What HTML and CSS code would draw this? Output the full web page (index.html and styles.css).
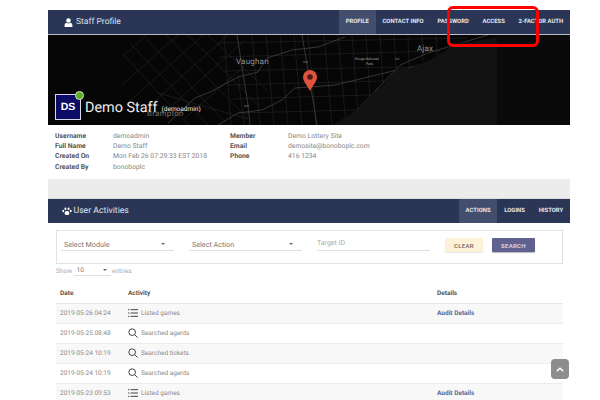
FILE: index.html
```html
<!DOCTYPE html>
<html lang="en">
<head>
<meta charset="utf-8">
<title>Staff Profile</title>
<link rel="stylesheet" href="styles.css">
</head>
<body>
<main class="page">
  <section class="panel">
    <header class="bar">
      <h2 class="bar-title">
        <svg class="bar-icon" viewBox="0 0 12 12"><circle cx="6" cy="3.2" r="3"/><path d="M0.8 12V9.6C.8 7.6 2.2 6.6 3.6 6.4 4.3 7 5 7.3 6 7.3S7.7 7 8.4 6.4C9.8 6.6 11.2 7.6 11.2 9.6V12Z"/></svg>
        Staff Profile
      </h2>
      <nav class="tabs">
        <a class="tab active">PROFILE</a><a class="tab">CONTACT INFO</a><a class="tab">PASSWORD</a><a class="tab">ACCESS</a><a class="tab">2-FACTOR AUTH</a>
      </nav>
    </header>
    <div class="hero">
      <svg class="map" viewBox="0 0 522 90" preserveAspectRatio="none">
        <rect width="522" height="90" fill="#060606"/>
        <g class="roads-faint">
          <path d="M74 22L98 0M74 50L130 0M82 66L155 0M100 72L180 0M118 76L196 6M136 84L200 28M74 18L140 90M82 8L160 90M98 4L180 90M118 0L200 84M140 0L210 70M160 0L220 56"/>
          <path d="M176 0L183 90M190 40L196 90M204 0L212 90M218 0L226 90M232 0L240 90M246 0L254 90M260 0L268 90M276 0L284 90M290 0L298 90M304 0L310 78M318 0L322 62M332 0L335 48M346 0L348 34M360 0L361 32M374 0L375 26M388 0L389 20"/>
          <path d="M170 8L420 3M172 22L392 16M176 36L350 32M180 50L336 46M184 64L322 60M190 78L308 75M110 58L200 84"/>
        </g>
        <g class="roads">
          <path d="M120 88L147 63 162 57 190 42 210 37 219 23 244 15 270 12 297 2"/>
          <path d="M170 90L190 78 214 75 234 65 247 53 287 50 320 42 345 36 395 25"/>
          <path d="M189 0L200 70 202 90M254 0L262 47 269 90M308 76L352 30 380 18 440 0"/>
        </g>
        <path d="M285 90L309 75 325 58 335 50 352 30 362 33 382 25 399 15 401 8 424 7 449 2 457 0H522V90Z" fill="#121212"/>
        <rect x="449" width="73" height="90" fill="#0a0a0a"/>
        <text class="city" x="188" y="29">Vaughan</text>
        <text class="city" x="369" y="16">Ajax</text>
        <text class="city dim" x="99" y="81">Brampton</text>
        <text class="park" x="307" y="25">Rouge National</text>
        <text class="park" x="318" y="30">Park</text>
        <text class="shield" x="196" y="72">400</text>
        <text class="shield" x="347" y="25">401</text>
        <text class="shield" x="255" y="28">404</text>
        <path d="M262 56C259 50 255 46.500 255 42A7 7 0 0 1 269 42C269 46.500 265 50 262 56Z" fill="#e0533d"/>
        <circle cx="262" cy="42" r="2.800" fill="#4a1d18"/>
      </svg>
      <div class="identity">
        <div class="avatar">DS<span class="online"></span></div>
        <span class="name">Demo Staff</span>
        <span class="login">(demoadmin)</span>
      </div>
    </div>
    <div class="details">
      <dl class="fields">
        <dt>Username</dt><dd>demoadmin</dd>
        <dt>Full Name</dt><dd>Demo Staff</dd>
        <dt>Created On</dt><dd>Mon Feb 26 07:29:33 EST 2018</dd>
        <dt>Created By</dt><dd>bonoboplc</dd>
      </dl>
      <dl class="fields">
        <dt>Member</dt><dd>Demo Lottery Site</dd>
        <dt>Email</dt><dd>demosite@bonoboplc.com</dd>
        <dt>Phone</dt><dd>416 1234</dd>
      </dl>
    </div>
  </section>
  <div class="spacer"></div>
  <section class="panel">
    <header class="bar plain">
      <h2 class="bar-title">
        <svg class="bar-icon paw" viewBox="0 0 14 12"><ellipse cx="7" cy="8.600" rx="3.400" ry="3"/><ellipse cx="4.800" cy="2.600" rx="1.400" ry="2"/><ellipse cx="9.200" cy="2.600" rx="1.400" ry="2"/><ellipse cx="1.700" cy="5.600" rx="1.300" ry="1.700"/><ellipse cx="12.300" cy="5.600" rx="1.300" ry="1.700"/></svg>
        User Activities
      </h2>
      <nav class="tabs">
        <a class="tab active">ACTIONS</a><a class="tab">LOGINS</a><a class="tab">HISTORY</a>
      </nav>
    </header>
    <div class="filters">
      <div class="select wide"><span>Select Module</span><i class="caret"></i></div>
      <div class="select wide"><span>Select Action</span><i class="caret"></i></div>
      <div class="select target"><span>Target ID</span></div>
      <button class="btn clear">CLEAR</button>
      <button class="btn search">SEARCH</button>
    </div>
    <div class="entries">
      Show
      <div class="select mini"><span>10</span><i class="caret"></i></div>
      entries
    </div>
    <table class="log">
      <thead>
        <tr><th class="c-date">Date</th><th class="c-act">Activity</th><th>Details</th></tr>
      </thead>
      <tbody>
        <tr><td>2019-05-26 04:24</td><td><span class="act"><svg class="ico" viewBox="0 0 12 10"><path d="M0 1H1.500M3 1H12M0 5H1.500M3 5H12M0 9H1.500M3 9H12"/></svg>Listed games</span></td><td><a class="audit">Audit Details</a></td></tr>
        <tr><td>2019-05-25 08:48</td><td><span class="act"><svg class="ico" viewBox="0 0 12 12"><circle cx="5" cy="5" r="4"/><path d="M8 8L11.500 11.500"/></svg>Searched agents</span></td><td></td></tr>
        <tr><td>2019-05-24 10:19</td><td><span class="act"><svg class="ico" viewBox="0 0 12 12"><circle cx="5" cy="5" r="4"/><path d="M8 8L11.500 11.500"/></svg>Searched tickets</span></td><td></td></tr>
        <tr><td>2019-05-24 10:19</td><td><span class="act"><svg class="ico" viewBox="0 0 12 12"><circle cx="5" cy="5" r="4"/><path d="M8 8L11.500 11.500"/></svg>Searched agents</span></td><td></td></tr>
        <tr><td>2019-05-23 09:53</td><td><span class="act"><svg class="ico" viewBox="0 0 12 10"><path d="M0 1H1.500M3 1H12M0 5H1.500M3 5H12M0 9H1.500M3 9H12"/></svg>Listed games</span></td><td><a class="audit">Audit Details</a></td></tr>
      </tbody>
    </table>
  </section>
</main>
<button class="to-top" aria-label="Back to top"><svg viewBox="0 0 10 6"><path d="M1 5L5 1.500 9 5"/></svg></button>
<div class="callout"></div>
</body>
</html>
```
FILE: styles.css
```css
* { box-sizing: border-box; }
html, body { margin: 0; height: 400px; overflow: hidden; background: #fff; }
body { font-family: Roboto, "Liberation Sans", sans-serif; color: #777; position: relative; text-rendering: geometricPrecision; }
.page { width: 522px; margin-left: 48px; padding-top: 10px; }
.bar { height: 25px; background: #2b3657; display: flex; justify-content: space-between; align-items: stretch; border-bottom: 1px solid #b9bdca; }
.bar.plain { border-bottom: 0; height: 24px; }
.bar-title { margin: 0; padding-left: 16px; display: flex; align-items: center; gap: 3px; font-size: 8.500px; font-weight: 400; color: #dfe2ea; }
.bar.plain .bar-title { padding-left: 14px; gap: 1.500px; font-size: 8.700px; }
.bar-icon { width: 9px; height: 9px; fill: #fff; }
.bar-icon.paw { width: 10px; height: 8.500px; }
.tabs { display: flex; }
.tab { display: flex; align-items: center; padding: 0 6.900px; font-size: 5.900px; font-weight: 700; color: #e6e8ee; }
.tab.active { background: #434e6c; }
.hero { height: 90px; position: relative; overflow: hidden; background: #060606; }
.map { display: block; width: 100%; height: 100%; }
.roads-faint path { fill: none; stroke: #262626; stroke-width: .6; }
.roads path { fill: none; stroke: #414141; stroke-width: .8; }
.city { font-size: 8px; fill: #939393; letter-spacing: .2px; }
.city.dim { fill: #727272; }
.park { font-size: 3.500px; fill: #a5a5a5; }
.shield { font-size: 3px; fill: #808080; }
.identity { position: absolute; left: 7px; top: 59px; display: flex; align-items: center; color: #eee; }
.avatar { width: 26px; height: 26px; background: #0c0c66; border: 1px solid #d8d8e8; color: #fff; font-family: "Liberation Sans", sans-serif; font-size: 10.500px; font-weight: 700; display: flex; align-items: center; justify-content: center; position: relative; margin-right: 4px; }
.online { position: absolute; top: -4px; right: -4px; width: 9px; height: 9px; border-radius: 50%; background: #5cad22; border: 1px solid #cfe6bf; }
.name { font-size: 14.400px; }
.login { font-size: 6.500px; margin-top: 4px; margin-left: 4px; }
.details { display: flex; padding: 6px 7px 6px; height: 54px; }
.fields { margin: 0; display: grid; grid-template-columns: 58px auto; grid-auto-rows: 10.200px; align-content: start; font-size: 6.800px; line-height: 10.200px; width: 175px; }
.fields dt { font-weight: 700; color: #555; }
.fields dd { margin: 0; color: #888; white-space: nowrap; }
.spacer { height: 20px; background: #ececec; border-bottom: 1px solid #ddd; }
.filters { margin: 7px 7px 0 8px; height: 34px; border: 1px solid #e2e2e2; display: flex; align-items: flex-start; padding: 0 0 0 4px; }
.select { display: flex; justify-content: space-between; border-bottom: 1px solid #e0e0e0; font-size: 7.200px; color: #777; align-items: center; }
.select.wide { width: 113px; height: 20px; margin: 0 15px 0 0; padding: 7px 9px 0 3px; }
.select.target { width: 113px; height: 20px; padding: 0 0 1px; align-items: flex-end; color: #aaa; font-size: 7px; line-height: 12px; }
.caret { width: 0; height: 0; border: 2px solid transparent; border-top: 2.500px solid #666; border-bottom: 0; }
.btn { border: 0; border-radius: 1px; height: 14px; font-family: inherit; font-size: 6px; font-weight: 500; letter-spacing: .3px; padding: 0; margin-top: 7px; }
.clear { width: 38px; margin-left: 15px; background: #fdf1d8; color: #666; box-shadow: 0 1px 1px #e6e6e6; }
.search { width: 43px; margin-left: 9px; background: #60618f; color: #e4e4ee; box-shadow: 0 1px 1px #bbb; }
.entries { margin: 1px 0 0 8px; display: flex; align-items: center; gap: 1.500px; font-size: 6.500px; color: #aaa; height: 11px; }
.select.mini { width: 37px; height: 11px; color: #777; padding: 0 4px 0 3px; font-size: 6.500px; }
.log { width: 507px; margin: 7px 0 0 8px; border-collapse: collapse; font-size: 6.500px; table-layout: fixed; }
.log th { text-align: left; font-weight: 700; color: #555; height: 20px; padding: 0 4px; border-bottom: 1px solid #e6e6e6; }
.log td { height: 20px; padding: 0 4px; color: #888; border-bottom: 1px solid #ececec; }
.log tbody tr:nth-child(odd) td { background: #f8f8f8; }
.c-date { width: 68px; }
.c-act { width: 309px; }
.act { display: flex; align-items: center; gap: 3px; }
.ico { width: 10px; height: 10px; fill: none; stroke: #444; stroke-width: 1.200; flex: none; }
.audit { font-weight: 700; color: #5e6590; }
.to-top { position: absolute; left: 551px; top: 359px; width: 18px; height: 20px; border: 0; padding: 0; border-radius: 4px; background: #8d8d8d; display: flex; align-items: center; justify-content: center; }
.to-top svg { width: 8px; height: 5px; fill: none; stroke: #fff; stroke-width: 1.800; }
.callout { position: absolute; left: 447px; top: 6px; width: 92px; height: 41px; border: 3px solid #f00; border-radius: 6px; }
```
